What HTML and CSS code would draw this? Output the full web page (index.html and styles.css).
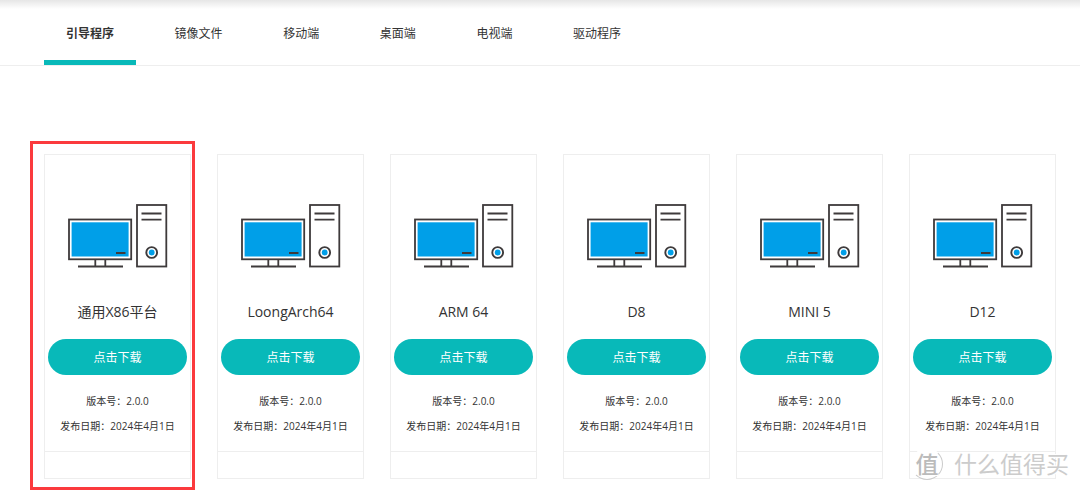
FILE: index.html
```html
<!DOCTYPE html>
<html lang="zh-CN">
<head>
<meta charset="utf-8">
<title>下载</title>
<link rel="stylesheet" href="styles.css">
</head>
<body>
<svg class="sprite" aria-hidden="true">
  <symbol id="pc" viewBox="0 0 100 64">
    <g fill="none" stroke="#3e3a3b" stroke-width="1.8">
      <rect x="1" y="15.500" width="62.200" height="39.800"/>
      <path d="M27.300 55.500v7M37.300 55.500v7M10 62.500h45"/>
      <rect x="69" y="1" width="29.300" height="61.500"/>
      <path d="M73.500 9.500h20M73.500 15.700h20"/>
    </g>
    <rect x="3.600" y="18.300" width="57" height="34.200" fill="#009fe8"/>
    <path d="M48 49h9.500" stroke="#3e3a3b" stroke-width="2"/>
    <circle cx="83.700" cy="48.500" r="5.400" fill="#fff" stroke="#3e3a3b" stroke-width="1.900"/>
    <circle cx="83.700" cy="48.500" r="2.900" fill="#009fe8"/>
  </symbol>
</svg>
<nav class="nav">
  <div class="tabs">
    <a class="tab active" href="#">引导程序</a>
    <a class="tab" href="#">镜像文件</a>
    <a class="tab" href="#">移动端</a>
    <a class="tab" href="#">桌面端</a>
    <a class="tab" href="#">电视端</a>
    <a class="tab" href="#">驱动程序</a>
  </div>
</nav>
<main class="grid">
  <article class="card marked">
    <svg class="pic" aria-hidden="true"><use href="#pc"/></svg>
    <h2 class="name">通用X86平台</h2>
    <button class="btn">点击下载</button>
    <p class="info">版本号：2.0.0</p>
    <p class="info">发布日期：2024年4月1日</p>
    <div class="foot"></div>
  </article>
  <article class="card">
    <svg class="pic" aria-hidden="true"><use href="#pc"/></svg>
    <h2 class="name">LoongArch64</h2>
    <button class="btn">点击下载</button>
    <p class="info">版本号：2.0.0</p>
    <p class="info">发布日期：2024年4月1日</p>
    <div class="foot"></div>
  </article>
  <article class="card">
    <svg class="pic" aria-hidden="true"><use href="#pc"/></svg>
    <h2 class="name">ARM 64</h2>
    <button class="btn">点击下载</button>
    <p class="info">版本号：2.0.0</p>
    <p class="info">发布日期：2024年4月1日</p>
    <div class="foot"></div>
  </article>
  <article class="card">
    <svg class="pic" aria-hidden="true"><use href="#pc"/></svg>
    <h2 class="name">D8</h2>
    <button class="btn">点击下载</button>
    <p class="info">版本号：2.0.0</p>
    <p class="info">发布日期：2024年4月1日</p>
    <div class="foot"></div>
  </article>
  <article class="card">
    <svg class="pic" aria-hidden="true"><use href="#pc"/></svg>
    <h2 class="name">MINI 5</h2>
    <button class="btn">点击下载</button>
    <p class="info">版本号：2.0.0</p>
    <p class="info">发布日期：2024年4月1日</p>
    <div class="foot"></div>
  </article>
  <article class="card">
    <svg class="pic" aria-hidden="true"><use href="#pc"/></svg>
    <h2 class="name">D12</h2>
    <button class="btn">点击下载</button>
    <p class="info">版本号：2.0.0</p>
    <p class="info">发布日期：2024年4月1日</p>
    <div class="foot"></div>
  </article>
</main>
<div class="watermark"><span class="seal">值</span><span>什么值得买</span></div>
</body>
</html>
```
FILE: styles.css
```css
* { box-sizing: border-box; }
body {
  position: relative;
  margin: 0;
  padding-bottom: 12px;
  background: #fff;
  color: #333;
  font-family: "Open Sans", "Noto Sans CJK SC", sans-serif;
}
.sprite { display: none; }
.nav {
  padding: 0 44px;
  border-bottom: 1px solid #eee;
  background: linear-gradient(#e6e6e6, #fff 9px);
}
.tabs {
  display: flex;
  justify-content: space-between;
  max-width: 599px;
}
.tab {
  height: 65px;
  padding: 0 22px;
  color: #333;
  font-size: 12px;
  line-height: 68px;
  text-decoration: none;
}
.active {
  border-bottom: 5px solid #08b9b9;
  font-weight: 700;
}
.grid {
  display: grid;
  grid-template-columns: repeat(6, 1fr);
  gap: 26px;
  padding: 88px 24px 0 44px;
}
.card {
  position: relative;
  display: flex;
  flex-direction: column;
  border: 1px solid #eee;
  padding-top: 49px;
  text-align: center;
}
.marked::after {
  content: "";
  position: absolute;
  inset: -14px -5px -12px -15px;
  border: 3px solid #fb3a3d;
}
.pic {
  width: 100px;
  height: 64px;
  margin: 0 auto;
}
.name {
  margin: 32px 0 15px;
  font-size: 14px;
  font-weight: 400;
  line-height: 24px;
}
.btn {
  height: 36px;
  margin: 0 3px 14px;
  border: 0;
  border-radius: 18px;
  background: #08b9b9;
  color: #fff;
  font-family: inherit;
  font-size: 12px;
}
.info {
  margin: 0;
  font-size: 10px;
  line-height: 25px;
  white-space: nowrap;
}
.foot {
  height: 27px;
  margin-top: 12px;
  border-top: 1px solid #eee;
}
.watermark {
  position: absolute;
  right: 11px;
  bottom: 11px;
  display: flex;
  align-items: center;
  gap: 11px;
  color: #ccc;
  font-size: 23px;
  line-height: 32px;
  text-shadow: 1px 1px #fff, -1px -1px #fff;
}
.seal {
  width: 32px;
  border: 1px solid #fff;
  border-right-color: #ccc;
  border-bottom-color: #ccc;
  border-radius: 50%;
  background: #fff;
  color: #bbb;
  font-style: oblique 8deg;
  font-weight: 500;
  line-height: 30px;
  text-align: center;
}
```
